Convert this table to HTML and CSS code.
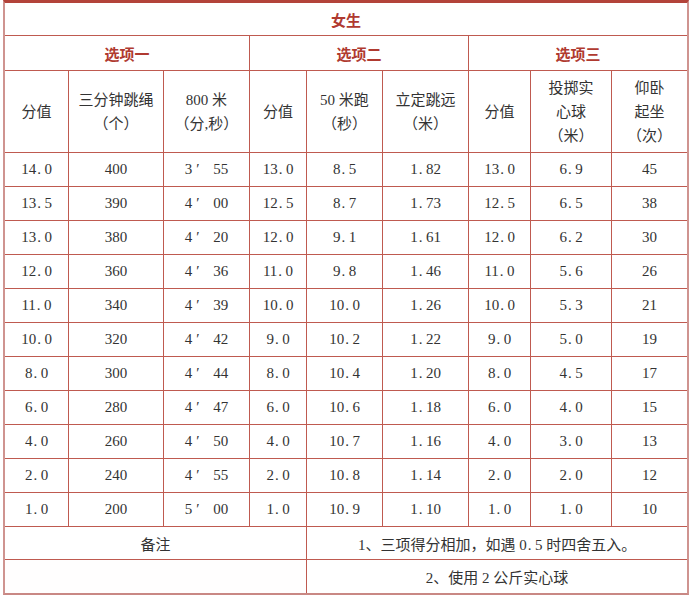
FILE: index.html
```html
<!DOCTYPE html>
<html lang="zh-CN">
<head>
<meta charset="utf-8">
<title>女生</title>
<link rel="stylesheet" href="styles.css">
</head>
<body>
<table class="score">
  <colgroup>
    <col class="c1"><col class="c2"><col class="c3"><col class="c4"><col class="c5"><col class="c6"><col class="c7"><col class="c8"><col class="c9">
  </colgroup>
  <tr class="r-title"><th colspan="9" class="last">女生</th></tr>
  <tr class="r-group">
    <th colspan="3">选项一</th>
    <th colspan="3">选项二</th>
    <th colspan="3" class="last">选项三</th>
  </tr>
  <tr class="r-head">
    <td>分值</td>
    <td>三分钟跳绳<br>（个）</td>
    <td>800 米<br>（分,秒）</td>
    <td>分值</td>
    <td>50 米跑<br>（秒）</td>
    <td>立定跳远<br>（米）</td>
    <td>分值</td>
    <td>投掷实<br>心球<br>（米）</td>
    <td class="last">仰卧<br>起坐<br>（次）</td>
  </tr>
  <tr class="r-data"><td>14<i>.</i>0</td><td>400</td><td>3<i class="m">′</i>55</td><td>13<i>.</i>0</td><td>8<i>.</i>5</td><td>1<i>.</i>82</td><td>13<i>.</i>0</td><td>6<i>.</i>9</td><td class="last">45</td></tr>
  <tr class="r-data"><td>13<i>.</i>5</td><td>390</td><td>4<i class="m">′</i>00</td><td>12<i>.</i>5</td><td>8<i>.</i>7</td><td>1<i>.</i>73</td><td>12<i>.</i>5</td><td>6<i>.</i>5</td><td class="last">38</td></tr>
  <tr class="r-data"><td>13<i>.</i>0</td><td>380</td><td>4<i class="m">′</i>20</td><td>12<i>.</i>0</td><td>9<i>.</i>1</td><td>1<i>.</i>61</td><td>12<i>.</i>0</td><td>6<i>.</i>2</td><td class="last">30</td></tr>
  <tr class="r-data"><td>12<i>.</i>0</td><td>360</td><td>4<i class="m">′</i>36</td><td>11<i>.</i>0</td><td>9<i>.</i>8</td><td>1<i>.</i>46</td><td>11<i>.</i>0</td><td>5<i>.</i>6</td><td class="last">26</td></tr>
  <tr class="r-data"><td>11<i>.</i>0</td><td>340</td><td>4<i class="m">′</i>39</td><td>10<i>.</i>0</td><td>10<i>.</i>0</td><td>1<i>.</i>26</td><td>10<i>.</i>0</td><td>5<i>.</i>3</td><td class="last">21</td></tr>
  <tr class="r-data"><td>10<i>.</i>0</td><td>320</td><td>4<i class="m">′</i>42</td><td>9<i>.</i>0</td><td>10<i>.</i>2</td><td>1<i>.</i>22</td><td>9<i>.</i>0</td><td>5<i>.</i>0</td><td class="last">19</td></tr>
  <tr class="r-data"><td>8<i>.</i>0</td><td>300</td><td>4<i class="m">′</i>44</td><td>8<i>.</i>0</td><td>10<i>.</i>4</td><td>1<i>.</i>20</td><td>8<i>.</i>0</td><td>4<i>.</i>5</td><td class="last">17</td></tr>
  <tr class="r-data"><td>6<i>.</i>0</td><td>280</td><td>4<i class="m">′</i>47</td><td>6<i>.</i>0</td><td>10<i>.</i>6</td><td>1<i>.</i>18</td><td>6<i>.</i>0</td><td>4<i>.</i>0</td><td class="last">15</td></tr>
  <tr class="r-data"><td>4<i>.</i>0</td><td>260</td><td>4<i class="m">′</i>50</td><td>4<i>.</i>0</td><td>10<i>.</i>7</td><td>1<i>.</i>16</td><td>4<i>.</i>0</td><td>3<i>.</i>0</td><td class="last">13</td></tr>
  <tr class="r-data"><td>2<i>.</i>0</td><td>240</td><td>4<i class="m">′</i>55</td><td>2<i>.</i>0</td><td>10<i>.</i>8</td><td>1<i>.</i>14</td><td>2<i>.</i>0</td><td>2<i>.</i>0</td><td class="last">12</td></tr>
  <tr class="r-data"><td>1<i>.</i>0</td><td>200</td><td>5<i class="m">′</i>00</td><td>1<i>.</i>0</td><td>10<i>.</i>9</td><td>1<i>.</i>10</td><td>1<i>.</i>0</td><td>1<i>.</i>0</td><td class="last">10</td></tr>
  <tr class="r-note1">
    <td colspan="4">备注</td>
    <td colspan="5" class="last">1、三项得分相加，如遇 0<i>.</i>5 时四舍五入。</td>
  </tr>
  <tr class="r-note2">
    <td colspan="4" class="blank"></td>
    <td colspan="5" class="last">2、使用 2 公斤实心球</td>
  </tr>
</table>
</body>
</html>
```

FILE: styles.css
```css
html, body {
  margin: 0;
  padding: 0;
  background: #ffffff;
}

.score {
  margin-left: 3px;
  border-collapse: separate;
  border-spacing: 0;
  table-layout: fixed;
  width: 686px;
  border-top: 3px solid #b3433a;
  border-left: 2px solid #cf9490;
  border-right: 2px solid #cf9490;
  border-bottom: 2px solid #c98884;
  font-family: "Liberation Serif", "Noto Sans CJK SC", serif;
  font-size: 15px;
  color: #333333;
  text-spacing-trim: space-all;
}

.c1 { width: 64px; }
.c2 { width: 95px; }
.c3 { width: 86px; }
.c4 { width: 57px; }
.c5 { width: 76px; }
.c6 { width: 86px; }
.c7 { width: 62px; }
.c8 { width: 81px; }
.c9 { width: 75px; }

.score th,
.score td {
  box-sizing: border-box;
  padding: 0;
  text-align: center;
  vertical-align: middle;
  border-right: 1px solid #bf5a50;
  border-bottom: 1px solid #bf5a50;
}

.score .last {
  border-right: none;
}

.score th {
  font-family: "Noto Sans CJK SC", sans-serif;
  font-weight: 700;
  color: #b03a30;
  font-size: 15px;
}

.r-title th { height: 33px; }
.r-group th { height: 35px; }
.r-head td {
  height: 82px;
  line-height: 24px;
}
.r-data td { height: 34px; }
.r-note1 td { height: 33px; }
.r-note2 td {
  height: 33px;
  border-bottom: none;
}
.r-note2 .blank {
  background: #fffefe;
}

.score i {
  font-style: normal;
  display: inline-block;
  width: 0.55em;
  text-align: left;
  padding-left: 1px;
  box-sizing: border-box;
}

.score i.m {
  width: 21px;
  padding-left: 4px;
}
```
